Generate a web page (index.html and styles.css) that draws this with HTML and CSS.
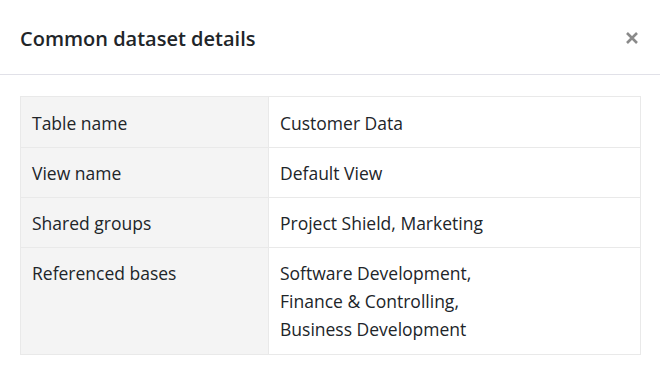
FILE: index.html
```html
<!DOCTYPE html>
<html>
<head>
<meta charset="utf-8">
<link rel="stylesheet" href="styles.css">
</head>
<body>
<div class="dialog">
  <div class="dialog-header">
    <h1 class="title">Common dataset details</h1>
    <button class="close" aria-label="Close">
      <svg width="14" height="14" viewBox="0 0 14 14"><path d="M2 2L12 12M12 2L2 12" stroke="#8a8a8a" stroke-width="2.6" stroke-linecap="butt"/></svg>
    </button>
  </div>
  <div class="dialog-body">
    <table class="details">
      <tr class="first"><td class="key">Table name</td><td class="val">Customer Data</td></tr>
      <tr><td class="key">View name</td><td class="val">Default View</td></tr>
      <tr><td class="key">Shared groups</td><td class="val">Project Shield, Marketing</td></tr>
      <tr class="last"><td class="key">Referenced bases</td><td class="val">Software Development,<br>Finance &amp; Controlling,<br>Business Development</td></tr>
    </table>
  </div>
</div>
</body>
</html>
```
FILE: styles.css
```css
html, body {
  margin: 0;
  padding: 0;
  background: #fff;
}
body {
  font-family: "Open Sans", "Noto Sans", sans-serif;
  color: #212529;
}
.dialog {
  width: 660px;
}
.dialog-header {
  height: 75px;
  box-sizing: border-box;
  border-bottom: 1px solid #e1e1e8;
  display: flex;
  align-items: center;
  justify-content: space-between;
  padding: 2px 20px 0 20px;
}
.title {
  margin: 0;
  font-size: 20px;
  font-weight: 600;
  color: #212529;
  letter-spacing: 0;
}
.close {
  border: 0;
  background: none;
  padding: 0;
  margin-right: 1px;
  width: 14px;
  height: 14px;
  display: flex;
  cursor: pointer;
}
.dialog-body {
  padding: 21px 19px 0 20px;
}
.details {
  width: 100%;
  border-collapse: collapse;
  font-size: 17.5px;
  line-height: 28px;
}
.details td {
  border: 1px solid #e9e9e9;
  padding: 11px 11px 10px 11px;
  vertical-align: top;
}
.details .first td {
  padding-top: 12px;
}
.details .last td {
  padding-bottom: 11px;
}
.details .key {
  width: 225px;
  background: #f4f4f4;
}
```
